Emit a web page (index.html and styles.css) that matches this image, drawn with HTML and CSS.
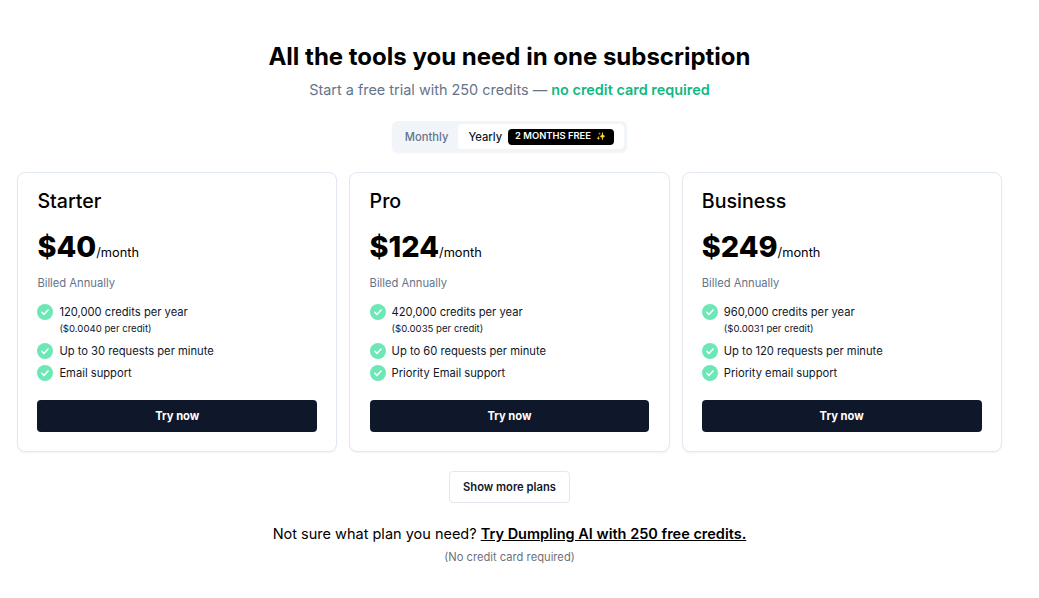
FILE: index.html
```html
<!DOCTYPE html>
<html lang="en">
<head>
    <meta charset="UTF-8">
    <meta name="viewport" content="width=device-width, initial-scale=1.0">
    <title>Pricing</title>
    <link rel="stylesheet" href="styles.css">
</head>
<body>
    <svg class="sprite" width="0" height="0">
        <symbol id="check" viewBox="0 0 16 16">
            <circle cx="8" cy="8" r="8" fill="#6ee7b7"/>
            <path d="M4.8 8.3l2.1 2.1 4.2-4.4" fill="none" stroke="#fff" stroke-width="1.5" stroke-linecap="round" stroke-linejoin="round"/>
        </symbol>
    </svg>

    <main class="page">
        <!-- Header -->
        <h1 class="title">All the tools you need in one subscription</h1>
        <p class="subtitle">Start a free trial with 250 credits — <strong>no credit card required</strong></p>

        <!-- Billing toggle -->
        <div class="toggle-row">
            <div class="toggle">
                <span class="toggle-off">Monthly</span>
                <span class="toggle-on">Yearly <span class="badge">2 MONTHS FREE<span class="sparkle">✨</span></span></span>
            </div>
        </div>

        <!-- Plans -->
        <section class="plans">
            <div class="plan">
                <h2>Starter</h2>
                <p class="price"><b>$40</b>/month</p>
                <p class="billed">Billed Annually</p>
                <ul>
                    <li><svg class="tick"><use href="#check"/></svg><div>120,000 credits per year<small>($0.0040 per credit)</small></div></li>
                    <li><svg class="tick"><use href="#check"/></svg><div>Up to 30 requests per minute</div></li>
                    <li><svg class="tick"><use href="#check"/></svg><div>Email support</div></li>
                </ul>
                <button class="try">Try now</button>
            </div>
            <div class="plan">
                <h2>Pro</h2>
                <p class="price"><b>$124</b>/month</p>
                <p class="billed">Billed Annually</p>
                <ul>
                    <li><svg class="tick"><use href="#check"/></svg><div>420,000 credits per year<small>($0.0035 per credit)</small></div></li>
                    <li><svg class="tick"><use href="#check"/></svg><div>Up to 60 requests per minute</div></li>
                    <li><svg class="tick"><use href="#check"/></svg><div>Priority Email support</div></li>
                </ul>
                <button class="try">Try now</button>
            </div>
            <div class="plan">
                <h2>Business</h2>
                <p class="price"><b>$249</b>/month</p>
                <p class="billed">Billed Annually</p>
                <ul>
                    <li><svg class="tick"><use href="#check"/></svg><div>960,000 credits per year<small>($0.0031 per credit)</small></div></li>
                    <li><svg class="tick"><use href="#check"/></svg><div>Up to 120 requests per minute</div></li>
                    <li><svg class="tick"><use href="#check"/></svg><div>Priority email support</div></li>
                </ul>
                <button class="try">Try now</button>
            </div>
        </section>

        <div class="more-row">
            <button class="more">Show more plans</button>
        </div>

        <!-- Footer note -->
        <p class="note">Not sure what plan you need? <a href="#">Try Dumpling AI with 250 free credits.</a></p>
        <p class="fine">(No credit card required)</p>
    </main>
</body>
</html>
```

FILE: styles.css
```css
* {
    box-sizing: border-box;
}
body {
    font-family: Inter, "Noto Sans", sans-serif;
    margin: 0;
    padding: 0;
    color: #000;
    background-color: #fff;
}
.sprite {
    display: block;
    height: 0;
}
.page {
    width: 984.6px;
    margin-left: 17.2px;
    padding-top: 42px;
    text-align: center;
}
.title {
    margin: 0;
    font-size: 24px;
    line-height: 30px;
    font-weight: 700;
}
.subtitle {
    margin: 8px 0 0;
    font-size: 14.45px;
    line-height: 20px;
    color: #64748b;
}
.subtitle strong {
    font-weight: 600;
    color: #10b981;
}
.toggle-row {
    display: flex;
    justify-content: center;
    margin-top: 21px;
}
.toggle {
    display: flex;
    align-items: center;
    height: 31px;
    padding: 3px;
    background-color: #f1f5f9;
    border-radius: 6px;
    box-shadow: 0 1px 2px rgba(0, 0, 0, 0.05);
    font-size: 11.2px;
    font-weight: 500;
}
.toggle-off {
    padding: 0 10px;
    color: #64748b;
}
.toggle-on {
    display: flex;
    align-items: center;
    gap: 6px;
    height: 25px;
    padding: 0 10px;
    background-color: #fff;
    border-radius: 4px;
    color: #0f172a;
}
.badge {
    display: block;
    width: 106px;
    height: 16px;
    padding: 0 7px;
    background-color: #000;
    border-radius: 4px;
    color: #fff;
    font-size: 9.4px;
    line-height: 13px;
    font-weight: 600;
    text-align: left;
    white-space: nowrap;
}
.sparkle {
    margin-left: 5px;
    font-size: 8px;
}
.plans {
    display: grid;
    grid-template-columns: repeat(3, 1fr);
    gap: 12px;
    margin-top: 20px;
    text-align: left;
}
.plan {
    height: 280px;
    padding: 16px 19.2px 19px;
    background-color: #fff;
    border: 1px solid #e2e8f0;
    border-radius: 8px;
    box-shadow: 0 1px 2px rgba(0, 0, 0, 0.05);
}
.plan h2 {
    margin: 0;
    font-size: 19.6px;
    line-height: 24px;
    font-weight: 500;
}
.price {
    margin: 16px 0 0;
    font-size: 12.8px;
    line-height: 36px;
}
.price b {
    font-size: 28.8px;
    font-weight: 800;
}
.billed {
    margin: 4px 0 0;
    font-size: 11.2px;
    line-height: 16px;
    color: #64748b;
}
.plan ul {
    list-style: none;
    margin: 13px 0 0;
    padding: 0;
}
.plan li {
    display: flex;
    gap: 6px;
    margin-bottom: 6px;
    font-size: 11.2px;
    line-height: 16px;
    color: #0f172a;
}
.tick {
    flex: none;
    width: 16px;
    height: 16px;
}
.plan li small {
    display: block;
    padding-top: 1px;
    font-size: 9.6px;
    line-height: 16px;
}
.try {
    display: block;
    width: 100%;
    height: 32px;
    margin-top: 19px;
    background-color: #0f172a;
    color: #fff;
    border: none;
    border-radius: 4px;
    font-family: inherit;
    font-size: 11.2px;
    font-weight: 700;
}
.more-row {
    display: flex;
    justify-content: center;
    margin-top: 19px;
}
.more {
    width: 121px;
    height: 32px;
    background-color: #fff;
    color: #0f172a;
    border: 1px solid #e2e8f0;
    border-radius: 4px;
    font-family: inherit;
    font-size: 11.2px;
    font-weight: 600;
}
.note {
    margin: 22px 0 0;
    font-size: 14.5px;
    line-height: 18px;
}
.note a {
    color: #000;
    font-weight: 600;
}
.fine {
    margin: 6px 0 0;
    font-size: 11.2px;
    line-height: 16px;
    color: #71717a;
}
```
